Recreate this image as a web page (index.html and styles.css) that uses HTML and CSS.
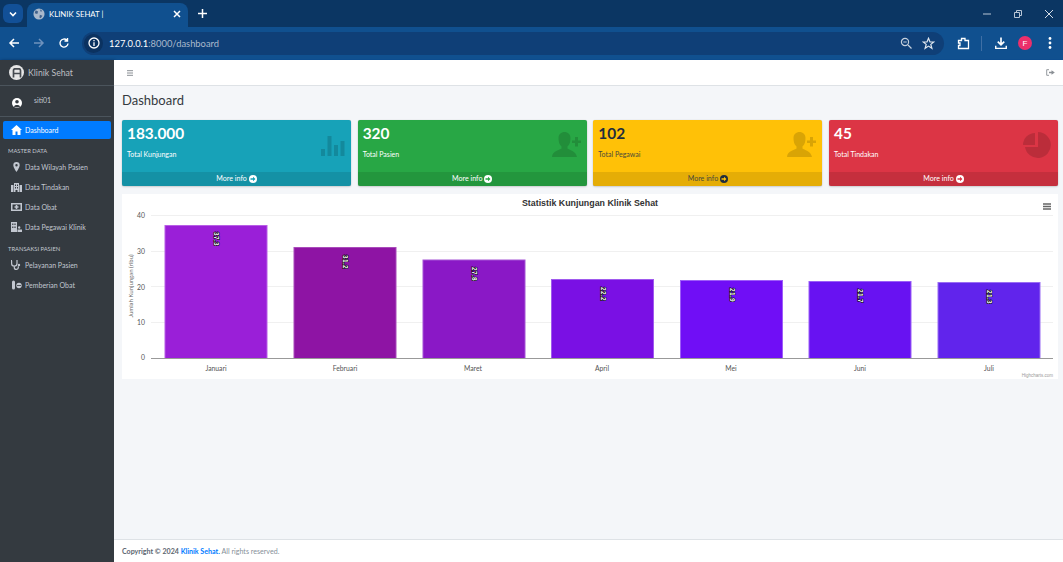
FILE: index.html
```html
<!DOCTYPE html>
<html lang="id">
<head>
<meta charset="utf-8">
<title>KLINIK SEHAT |</title>
<link rel="stylesheet" href="styles.css">
</head>
<body>
<div class="browser">
  <header class="tabbar">
    <div class="tab-search"><svg width="10" height="10" viewBox="0 0 10 10"><path d="M2 3.500 5 6.500 8 3.500" fill="none" stroke="#fff" stroke-width="1.600"/></svg></div>
    <div class="tab">
      <svg class="globe" width="12" height="12" viewBox="0 0 14 14"><circle cx="7" cy="7" r="6.500" fill="#a9b9cc"/><path d="M3 2.500 6 4 5 7 2 6ZM8 8l3 1-2 3-1.500-1ZM8 1.500l3 2-2 1Z" fill="#40628c"/></svg>
      <span class="tab-title">KLINIK SEHAT |</span>
      <svg class="tab-close" width="8" height="8" viewBox="0 0 8 8"><path d="M1 1 7 7M7 1 1 7" stroke="#fff" stroke-width="1.500"/></svg>
    </div>
    <svg class="new-tab" width="9" height="9" viewBox="0 0 9 9"><path d="M4.500 0V9M0 4.500H9" stroke="#fff" stroke-width="1.500"/></svg>
    <div class="window-controls">
      <svg width="10" height="10" viewBox="0 0 10 10"><path d="M1 5H9" stroke="#b9c6d6" stroke-width="1"/></svg>
      <svg width="10" height="10" viewBox="0 0 10 10"><path d="M1.500 3.500h5v5h-5zM3.500 3.500v-2h5v5h-2" fill="none" stroke="#b9c6d6" stroke-width="1"/></svg>
      <svg width="10" height="10" viewBox="0 0 10 10"><path d="M1 1 9 9M9 1 1 9" stroke="#d5dde7" stroke-width="1"/></svg>
    </div>
  </header>
  <div class="toolbar">
    <svg class="nav-ic" width="12" height="12" viewBox="0 0 12 12"><path d="M11 6H2M6 2 2 6l4 4" fill="none" stroke="#fff" stroke-width="1.500"/></svg>
    <svg class="nav-ic" width="12" height="12" viewBox="0 0 12 12"><path d="M1 6h9M6 2l4 4-4 4" fill="none" stroke="#6f92bd" stroke-width="1.500"/></svg>
    <svg class="nav-ic" width="12" height="12" viewBox="0 0 12 12"><path d="M10 6.500A4 4 0 1 1 8.800 3.200M9.500 1v3h-3" fill="none" stroke="#fff" stroke-width="1.400"/></svg>
    <div class="omnibox">
      <span class="site-info"><svg width="12" height="12" viewBox="0 0 12 12"><circle cx="6" cy="6" r="5" fill="none" stroke="#fff" stroke-width="1.300"/><path d="M6 5.300V9M6 3v1.300" stroke="#fff" stroke-width="1.300"/></svg></span>
      <span class="url"><span class="url-host">127.0.0.1</span>:8000/dashboard</span>
      <svg class="omni-ic zoom-ic" width="12" height="12" viewBox="0 0 12 12"><circle cx="5" cy="5" r="3.600" fill="none" stroke="#c5d0dd" stroke-width="1.200"/><path d="M8 8l3.500 3.500M3.300 5h3.400" stroke="#c5d0dd" stroke-width="1.200"/></svg>
      <svg class="omni-ic" width="13" height="13" viewBox="0 0 13 13"><path d="M6.500 1.300 8 5h3.800L8.800 7.400 9.900 11.300 6.500 9.100 3.100 11.300 4.200 7.400 1.200 5H5Z" fill="none" stroke="#dfe6ee" stroke-width="1.200"/></svg>
    </div>
    <svg class="ext" width="13" height="13" viewBox="0 0 13 13"><path d="M1.500 3.500H4.500V1.500H8V3.500H11.500V11.500H1.500V8.500H3V6H1.500Z" fill="none" stroke="#fff" stroke-width="1.300"/></svg>
    <span class="tool-sep"></span>
    <svg class="dl" width="12" height="13" viewBox="0 0 13 13"><path d="M6.500 0v7M3 4.500l3.500 3.500 3.500-3.500" fill="none" stroke="#fff" stroke-width="1.800"/><path d="M.8 9v2.800h11.400V9" fill="none" stroke="#fff" stroke-width="1.500"/></svg>
    <span class="avatar">F</span>
    <svg class="kebab" width="4" height="14" viewBox="0 0 4 14"><circle cx="2" cy="2.500" r="1.400" fill="#fff"/><circle cx="2" cy="7" r="1.400" fill="#fff"/><circle cx="2" cy="11.500" r="1.400" fill="#fff"/></svg>
  </div>

  <div class="app">
    <aside class="sidebar">
      <div class="brand">
        <span class="brand-logo"><svg width="10" height="10" viewBox="0 0 10 10"><path d="M1.500 9.500V2.500Q1.500 .8 3 .8H7Q8.500 .8 8.500 2.500V9.500M1.500 5.500H8.500" fill="none" stroke="#454a50" stroke-width="1.700"/></svg></span>
        <span class="brand-name">Klinik Sehat</span>
      </div>
      <div class="user">
        <svg class="user-ic" width="10" height="10" viewBox="0 0 10 10"><circle cx="5" cy="5" r="5" fill="#fff"/><circle cx="5" cy="3.800" r="1.800" fill="#343a40"/><path d="M1.800 8.600C2.200 6.500 7.800 6.500 8.200 8.600Q5 10.500 1.800 8.600Z" fill="#343a40"/></svg>
        <span class="user-name">siti01</span>
      </div>
      <nav class="menu">
        <a class="item active"><svg class="item-ic" width="11" height="10" viewBox="0 0 11 10"><path d="M5.500 0 11 5H9.500V10H6.500V6.500H4.500V10H1.500V5H0Z" fill="#fff"/></svg>Dashboard</a>
        <div class="menu-head">MASTER DATA</div>
        <a class="item"><svg class="item-ic" width="11" height="10" viewBox="0 0 11 10"><path fill-rule="evenodd" d="M5.500 0A3.200 3.200 0 0 0 2.300 3.200C2.300 5.200 5.500 10 5.500 10S8.700 5.200 8.700 3.200A3.200 3.200 0 0 0 5.500 0ZM5.500 2A1.200 1.200 0 1 1 5.500 4.400 1.200 1.200 0 0 1 5.500 2Z" fill="#c2c7d0"/></svg>Data Wilayah Pasien</a>
        <a class="item"><svg class="item-ic" width="11" height="10" viewBox="0 0 11 10"><path fill-rule="evenodd" d="M3 1H8V10H6.500V8H4.500V10H3ZM0 3H2.500V10H0ZM8.500 3H11V10H8.500ZM4 2.500V4H5V2.500ZM6 2.500V4H7V2.500ZM4 5V6.500H5V5ZM6 5V6.500H7V5Z" fill="#c2c7d0"/></svg>Data Tindakan</a>
        <a class="item"><svg class="item-ic" width="11" height="10" viewBox="0 0 11 10"><path fill-rule="evenodd" d="M0 1H11V9H0ZM1.500 2.500V7.500H9.500V2.500ZM4.700 3H6.300V4.200H7.500V5.800H6.300V7H4.700V5.800H3.500V4.200H4.700Z" fill="#c2c7d0"/></svg>Data Obat</a>
        <a class="item"><svg class="item-ic" width="11" height="10" viewBox="0 0 11 10"><path fill-rule="evenodd" d="M0 0H6V10H0ZM1.200 1.500V3H2.400V1.500ZM3.400 1.500V3H4.600V1.500ZM1.200 4.500V6H2.400V4.500ZM3.400 4.500V6H4.600V4.500ZM7 5.500A1.200 1.200 0 1 1 9.400 5.500 1.200 1.200 0 0 1 7 5.500ZM6.500 7.500H11V10H6.500Z" fill="#c2c7d0"/></svg>Data Pegawai Klinik</a>
        <div class="menu-head">TRANSAKSI PASIEN</div>
        <a class="item"><svg class="item-ic" width="11" height="10" viewBox="0 0 11 10"><path d="M1 .7H.6V3.500A2.700 2.700 0 0 0 6 3.500V.7H5.400M3.300 6.200V7.400A2 2 0 0 0 7.300 7.400V6.200" fill="none" stroke="#c2c7d0" stroke-width="1.200"/><circle cx="8" cy="5" r="1.200" fill="#c2c7d0"/></svg>Pelayanan Pasien</a>
        <a class="item"><svg class="item-ic" width="11" height="10" viewBox="0 0 11 10"><path d="M1 2A1.500 1.500 0 0 1 4 2V8A1.500 1.500 0 0 1 1 8Z" fill="#c2c7d0"/><circle cx="8" cy="5.500" r="2.700" fill="#c2c7d0"/><path d="M6 5.500H10" stroke="#343a40" stroke-width=".8"/></svg>Pemberian Obat</a>
      </nav>
    </aside>

    <div class="main">
      <div class="topnav">
        <svg width="6" height="6" viewBox="0 0 6 6"><path d="M0 .7H6M0 3H6M0 5.300H6" stroke="#8a8f94" stroke-width="1"/></svg>
        <svg width="9" height="7" viewBox="0 0 9 7"><path d="M3 .7H.7V6.300H3" fill="none" stroke="#8a8f94" stroke-width=".9"/><path d="M3 2.800H5.500V1.200L8.800 3.500 5.500 5.800V4.200H3Z" fill="#8a8f94"/></svg>
      </div>
      <main class="content">
        <h1 class="page-title">Dashboard</h1>
        <section class="cards">
          <article class="card card-info">
            <div class="card-body"><div><div class="num">183.000</div><div class="label">Total Kunjungan</div></div>
              <svg class="card-ic" width="24" height="20" viewBox="0 0 24 20"><path d="M0 13H4V20H0ZM6.500 0H10.500V20H6.500ZM13 9H17V20H13ZM19.500 5H23.500V20H19.500Z"/></svg></div>
            <div class="card-foot">More info <svg class="arrow" width="8" height="8" viewBox="0 0 8 8"><circle class="arrow-disc" cx="4" cy="4" r="4"/><path class="arrow-head" d="M1.500 3.300H4V1.800L6.500 4 4 6.200V4.700H1.500Z"/></svg></div>
          </article>
          <article class="card card-success">
            <div class="card-body"><div><div class="num">320</div><div class="label">Total Pasien</div></div>
              <svg class="card-ic person" width="29" height="25" viewBox="0 0 29 25"><path d="M0 25C0 19 8 18 9.500 16.500V14.500C7 12.500 6.500 9 6.500 6 6.500 2.500 9 0 12.500 0S18.500 2.500 18.500 6C18.500 9 18 12.500 15.500 14.500V16.500C17 18 24 19 25 25ZM20 8.500H23V5H26V8.500H29V11H26V14.500H23V11H20Z"/></svg></div>
            <div class="card-foot">More info <svg class="arrow" width="8" height="8" viewBox="0 0 8 8"><circle class="arrow-disc" cx="4" cy="4" r="4"/><path class="arrow-head" d="M1.500 3.300H4V1.800L6.500 4 4 6.200V4.700H1.500Z"/></svg></div>
          </article>
          <article class="card card-warning">
            <div class="card-body"><div><div class="num">102</div><div class="label">Total Pegawai</div></div>
              <svg class="card-ic person" width="29" height="25" viewBox="0 0 29 25"><path d="M0 25C0 19 8 18 9.500 16.500V14.500C7 12.500 6.500 9 6.500 6 6.500 2.500 9 0 12.500 0S18.500 2.500 18.500 6C18.500 9 18 12.500 15.500 14.500V16.500C17 18 24 19 25 25ZM20 8.500H23V5H26V8.500H29V11H26V14.500H23V11H20Z"/></svg></div>
            <div class="card-foot">More info <svg class="arrow" width="8" height="8" viewBox="0 0 8 8"><circle class="arrow-disc" cx="4" cy="4" r="4"/><path class="arrow-head" d="M1.500 3.300H4V1.800L6.500 4 4 6.200V4.700H1.500Z"/></svg></div>
          </article>
          <article class="card card-danger">
            <div class="card-body"><div><div class="num">45</div><div class="label">Total Tindakan</div></div>
              <svg class="card-ic pie" width="28" height="28" viewBox="0 0 28 28"><path d="M12 2V14H0A12 12 0 0 1 12 2Z"/><path d="M15 1A13 13 0 1 1 2 16H15Z"/></svg></div>
            <div class="card-foot">More info <svg class="arrow" width="8" height="8" viewBox="0 0 8 8"><circle class="arrow-disc" cx="4" cy="4" r="4"/><path class="arrow-head" d="M1.500 3.300H4V1.800L6.500 4 4 6.200V4.700H1.500Z"/></svg></div>
          </article>
        </section>

        <section class="chart-card">
          <svg class="chart" width="936" height="185" viewBox="122 194 936 185">
            <text class="chart-title" x="590" y="206" text-anchor="middle">Statistik Kunjungan Klinik Sehat</text>
            <path class="menu-ic" d="M1043 204h8M1043 206.500h8M1043 209h8" />
            <g class="grid"><path d="M151 215.500H1053M151 251.500H1053M151 286.500H1053M151 322.500H1053"/></g>
            <g class="y-lbl">
              <text x="145" y="218" text-anchor="end">40</text><text x="145" y="254" text-anchor="end">30</text><text x="145" y="290" text-anchor="end">20</text><text x="145" y="325" text-anchor="end">10</text><text x="145" y="360" text-anchor="end">0</text>
            </g>
            <text class="y-title" transform="translate(133 286) rotate(-90)" text-anchor="middle">Jumlah Kunjungan (ribu)</text>
            <rect class="bar" x="165" y="225.500" width="102" height="133" fill="#9a1fd8" stroke="#b85fe6"/>
            <rect class="bar" x="294" y="247.500" width="102" height="111" fill="#8e14a4" stroke="#a94bba"/>
            <rect class="bar" x="423" y="260" width="102" height="98.500" fill="#8a18c6" stroke="#a654d6"/>
            <rect class="bar" x="551.500" y="279.500" width="102" height="79" fill="#7a10e4" stroke="#a05aee"/>
            <rect class="bar" x="680.500" y="280.500" width="102" height="78" fill="#700ef6" stroke="#9e5df9"/>
            <rect class="bar" x="809" y="281.500" width="102" height="77" fill="#6812f2" stroke="#9a5ef7"/>
            <rect class="bar" x="938" y="282.500" width="102" height="76" fill="#6124ec" stroke="#9a6df3"/>
            <path class="axis" d="M151 358.500H1053"/>
            <g class="val">
              <text transform="translate(216 239) rotate(90)" text-anchor="middle" dominant-baseline="central">37.3</text>
              <text transform="translate(345 262) rotate(90)" text-anchor="middle" dominant-baseline="central">31.2</text>
              <text transform="translate(474 274) rotate(90)" text-anchor="middle" dominant-baseline="central">27.8</text>
              <text transform="translate(603 294) rotate(90)" text-anchor="middle" dominant-baseline="central">22.2</text>
              <text transform="translate(732 295) rotate(90)" text-anchor="middle" dominant-baseline="central">21.9</text>
              <text transform="translate(860 296) rotate(90)" text-anchor="middle" dominant-baseline="central">21.7</text>
              <text transform="translate(989 297) rotate(90)" text-anchor="middle" dominant-baseline="central">21.3</text>
            </g>
            <g class="x-lbl">
              <text x="216" y="371" text-anchor="middle">Januari</text><text x="345" y="371" text-anchor="middle">Februari</text><text x="473" y="371" text-anchor="middle">Maret</text><text x="602" y="371" text-anchor="middle">April</text><text x="731" y="371" text-anchor="middle">Mei</text><text x="860" y="371" text-anchor="middle">Juni</text><text x="989" y="371" text-anchor="middle">Juli</text>
            </g>
            <text class="credit" x="1053" y="377" text-anchor="end">Highcharts.com</text>
          </svg>
        </section>
      </main>
      <footer class="footer"><b>Copyright © 2024 <span class="link">Klinik Sehat.</span></b> All rights reserved.</footer>
    </div>
  </div>
</div>
</body>
</html>
```
FILE: styles.css
```css
* { box-sizing: border-box; }
html, body { margin: 0; height: 100%; overflow: hidden; }
body { font-family: Lato, "Open Sans", sans-serif; color: #343a40; }
.browser { display: flex; flex-direction: column; width: 1063px; height: 562px; }

.tabbar { height: 27px; background: #0b3663; display: flex; align-items: flex-end; padding-left: 3px; flex: none; }
.tab-search { width: 20px; height: 19px; margin: 0 4px 4px 0; background: #125097; border-radius: 6px; display: flex; align-items: center; justify-content: center; }
.tab { width: 161px; height: 24px; background: #10508f; border-radius: 8px 8px 0 0; display: flex; align-items: center; padding: 0 7px 2px 6px; color: #fff; font: 7.800px Lato, sans-serif; }
.globe { margin-right: 4px; }
.tab-title { flex: 1; }
.new-tab { margin: 0 0 9px 10px; }
.window-controls { margin-left: auto; display: flex; gap: 21px; padding: 0 9px 8px 0; }

.toolbar { height: 33px; background: #10508f; border-bottom: 1px solid #0d4d8f; display: flex; align-items: center; padding-left: 8px; flex: none; }
.nav-ic { margin-right: 13px; }
.omnibox { width: 862px; height: 23px; margin-left: -1px; border-radius: 12px; background: #0f3f77; display: flex; align-items: center; padding: 0 9px 0 2px; }
.site-info { width: 19px; height: 19px; border-radius: 50%; background: #0b3260; display: flex; align-items: center; justify-content: center; margin-right: 6px; }
.url { font: 9.400px Lato, sans-serif; color: #aab9cc; flex: 1; }
.url-host { color: #fff; }
.omni-ic { margin-left: 10px; }
.ext { margin-left: 13px; }
.tool-sep { width: 1px; height: 15px; background: #3f6fa5; margin-left: 11px; }
.dl { margin-left: 13px; }
.avatar { width: 14px; height: 14px; border-radius: 50%; background: #ec2f6b; color: #fff; font: 8px "Liberation Sans", sans-serif; display: flex; align-items: center; justify-content: center; margin-left: 11px; }
.kebab { margin-left: 16px; }

.app { flex: 1; display: flex; min-height: 0; }
.sidebar { width: 114px; background: #343a40; color: #c2c7d0; flex: none; font-size: 7px; box-shadow: 1px 0 3px rgba(0,0,0,.25); }
.brand { height: 26px; display: flex; align-items: center; padding-left: 9px; border-bottom: 1px solid #4b545c; }
.brand-logo { width: 15px; height: 15px; border-radius: 50%; background: #e6e6e6; display: flex; align-items: center; justify-content: center; margin-right: 4px; }
.brand-name { font-size: 8.700px; color: #bdbfc2; }
.user { height: 31px; display: flex; padding: 12px 0 0 12px; margin: 0 3px 0 0; border-bottom: 1px solid #4b545c; }
.user-ic { margin-right: 12px; }
.user-name { margin-top: -2px; }
.menu { padding: 4px 3px 0; display: flex; flex-direction: column; }
.item { height: 20px; display: flex; align-items: center; padding-left: 8px; color: #c2c7d0; border-radius: 2px; }
.item-ic { margin-right: 3px; flex: none; }
.item.active { background: #007bff; color: #fff; height: 18px; }
.menu-head { height: 18px; padding: 6px 0 0 5px; font-size: 5.800px; line-height: 11px; color: #c2c7d0; }

.main { flex: 1; display: flex; flex-direction: column; min-width: 0; }
.topnav { height: 26px; background: #fff; border-bottom: 1px solid #dee2e6; display: flex; align-items: center; justify-content: space-between; padding: 0 8px 0 13px; flex: none; }
.content { flex: 1; background: #f4f6f9; padding: 6px 5px 0 8px; }
.page-title { margin: 0 0 11px; font-size: 13px; line-height: 17px; font-weight: 400; color: #343a40; }
.cards { display: grid; grid-template-columns: repeat(4, 229px); column-gap: 6.670px; }
.card { height: 66px; border-radius: 2px; display: flex; flex-direction: column; color: #fff; box-shadow: 0 0 1px rgba(0,0,0,.2), 0 1px 2px rgba(0,0,0,.15); }
.card-body { flex: 1; display: flex; justify-content: space-between; padding: 3px 6px 0 5px; }
.num { font-size: 15.400px; line-height: 20px; font-weight: 700; }
.label { font-size: 7px; line-height: 10px; margin-top: 6px; }
.card-ic { margin-top: 13px; fill: rgba(0,0,0,.15); }
.card-ic.person { margin-top: 9px; }
.card-ic.pie { margin-top: 8px; margin-right: 1px; }
.card-foot { height: 14px; font-size: 7.100px; line-height: 14px; text-align: center; background: rgba(0,0,0,.1); }
.arrow { vertical-align: -1.500px; }
.arrow-disc { fill: #fff; }
.arrow-head { fill: #17a2b8; }
.card-info { background: #17a2b8; }
.card-success { background: #28a745; }
.card-success .arrow-head { fill: #28a745; }
.card-warning { background: #ffc107; color: #1f2d3d; }
.card-warning .label, .card-warning .card-foot { color: #4a4a3a; }
.card-warning .arrow-disc { fill: #1f2d3d; }
.card-warning .arrow-head { fill: #ffc107; }
.card-danger { background: #dc3545; }
.card-danger .arrow-head { fill: #dc3545; }

.chart-card { margin-top: 8px; height: 185px; background: #fff; }
.chart { display: block; }
.chart-title { font: 700 8.850px "Liberation Sans", sans-serif; fill: #333; }
.menu-ic { stroke: #666; stroke-width: 1.500; fill: none; }
.grid path { stroke: #f0f0f0; stroke-width: 1; fill: none; }
.axis { stroke: #999; stroke-width: 1; fill: none; }
.y-lbl text, .x-lbl text { font: 6.800px Lato, sans-serif; fill: #555; }
.y-title { font: 6px Lato, sans-serif; fill: #666; }
.val text { font: 700 6.500px "Liberation Sans", sans-serif; letter-spacing: .4px; fill: #fff; stroke: #000; stroke-width: 1.200px; paint-order: stroke; }
.credit { font: 4.500px "Liberation Sans", sans-serif; fill: #999; }

.footer { height: 23px; background: #fff; border-top: 1px solid #dee2e6; padding: 0 8px; font-size: 7.100px; line-height: 23px; color: #869099; flex: none; }
.footer b { color: #5b6570; }
.link { color: #007bff; }
```
